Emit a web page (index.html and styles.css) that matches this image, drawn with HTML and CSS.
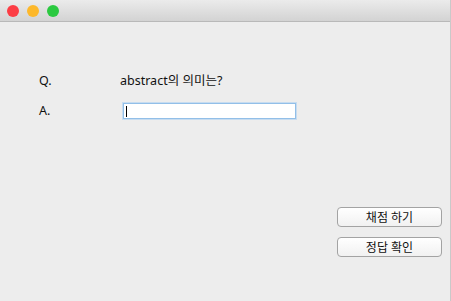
FILE: index.html
```html
<!DOCTYPE html>
<html lang="ko">
<head>
  <meta charset="UTF-8">
  <title>퀴즈</title>
  <link rel="stylesheet" href="styles.css">
</head>
<body>

<div class="window">
  <!-- 타이틀 바 -->
  <div class="titlebar">
    <span class="light red"></span>
    <span class="light yellow"></span>
    <span class="light green"></span>
  </div>

  <!-- 문제 영역 -->
  <div class="content">
    <div class="quiz">
      <div class="label">Q.</div>
      <div class="question">abstract의 의미는?</div>
      <div class="label">A.</div>
      <div class="answer"><span class="caret"></span></div>
    </div>

    <div class="buttons">
      <button class="btn">채점 하기</button>
      <button class="btn">정답 확인</button>
    </div>
  </div>
</div>

</body>
</html>
```

FILE: styles.css
```css
/* 기본 */
html, body {
  margin: 0;
  padding: 0;
}
body {
  font-family: "Noto Sans", "Noto Sans CJK KR", sans-serif;
  font-size: 12.5px;
  color: #111;
  background-color: #ececec;
}
.window {
  width: 451px;
  height: 301px;
  box-sizing: border-box;
  border-right: 1px solid #c9c9c9;
  display: flex;
  flex-direction: column;
}

/* 타이틀 바 */
.titlebar {
  height: 21px;
  display: flex;
  align-items: center;
  gap: 8px;
  padding-left: 7px;
  background: linear-gradient(#ebebeb, #d3d3d3);
  border-bottom: 1px solid #b9b9b9;
}
.light {
  width: 12px;
  height: 12px;
  border-radius: 50%;
}
.red {
  background-color: #fc3d44;
}
.yellow {
  background-color: #fdb82a;
}
.green {
  background-color: #2bc940;
}

/* 본문 */
.content {
  flex: 1;
  display: flex;
  flex-direction: column;
  background-color: #ededed;
}
.quiz {
  display: grid;
  grid-template-columns: 84px 173px;
  row-gap: 12px;
  align-items: center;
  margin: 50px 0 0 39px;
}
.label, .question {
  line-height: 18px;
}
.question {
  margin-left: -3px;
}
.answer {
  height: 14px;
  border: 1px solid #92bfe8;
  background-color: #fff;
  box-shadow: 0 0 0 1px #c7dcf0;
  display: flex;
  align-items: center;
  padding-left: 2px;
}
.caret {
  width: 1px;
  height: 11px;
  background-color: #000;
}

/* 버튼 */
.buttons {
  display: flex;
  flex-direction: column;
  align-items: flex-end;
  gap: 10px;
  margin: 87px 8px 0 0;
}
.btn {
  width: 105px;
  height: 20px;
  padding: 0;
  font-family: inherit;
  font-size: 12px;
  color: #111;
  border: 1px solid #a3a3a3;
  border-radius: 4px;
  background: linear-gradient(#ffffff, #f1f1f1);
}
```
